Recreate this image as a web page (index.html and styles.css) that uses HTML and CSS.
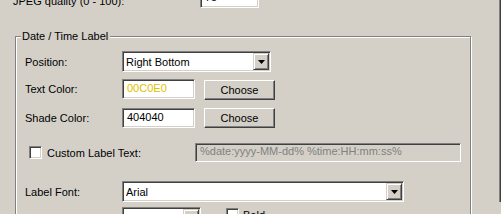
FILE: index.html
```html
<!DOCTYPE html>
<html>

<head>
    <title>Capture Settings</title>
    <meta charset="UTF-8">
    <link rel="stylesheet" href="styles.css">
</head>

<body>
    <div class="panel">
        <div class="row top-row">
            <span class="label jpeg-label">JPEG quality (0 - 100):</span>
            <div class="edit jpeg-edit">75</div>
        </div>

        <div class="group">
            <span class="legend">Date / Time Label</span>

            <div class="row row-position">
                <span class="label">Position:</span>
                <div class="combo combo-position">
                    <span class="combo-text">Right Bottom</span>
                    <span class="drop"><svg width="7" height="4" viewBox="0 0 7 4"><path d="M0 0h7L3.5 4z" fill="#000"/></svg></span>
                </div>
            </div>

            <div class="row row-text-color">
                <span class="label">Text Color:</span>
                <div class="edit color-edit text-color">00C0E0</div>
                <button class="btn">Choose</button>
            </div>

            <div class="row row-shade-color">
                <span class="label">Shade Color:</span>
                <div class="edit color-edit">404040</div>
                <button class="btn">Choose</button>
            </div>

            <div class="row row-custom">
                <span class="check"></span>
                <span class="check-label custom-label">Custom Label Text:</span>
                <div class="edit edit-disabled">%date:yyyy-MM-dd% %time:HH:mm:ss%</div>
            </div>

            <div class="row row-font">
                <span class="label">Label Font:</span>
                <div class="combo combo-font">
                    <span class="combo-text">Arial</span>
                    <span class="drop"><svg width="7" height="4" viewBox="0 0 7 4"><path d="M0 0h7L3.5 4z" fill="#000"/></svg></span>
                </div>
            </div>

            <div class="row row-size">
                <span class="label"></span>
                <div class="combo combo-size">
                    <span class="combo-text">10</span>
                    <span class="drop"><svg width="7" height="4" viewBox="0 0 7 4"><path d="M0 0h7L3.5 4z" fill="#000"/></svg></span>
                </div>
                <span class="check check-bold"></span>
                <span class="check-label">Bold</span>
            </div>
        </div>
    </div>
</body>

</html>
```

FILE: styles.css
```css
:root {
    --face: #D4D0C8;
    --shadow: #808080;
    --dark: #404040;
    --light: #ffffff;
}

html,
body {
    margin: 0;
    height: 100%;
    overflow: hidden;
}

body {
    background: var(--face);
    font-family: "Liberation Sans", Arial, sans-serif;
    font-size: 11px;
    color: #000;
}

.panel {
    width: 501px;
    height: 100%;
    box-sizing: border-box;
    padding-left: 13px;
    box-shadow: inset -1px 0 0 var(--dark), inset -2px 0 0 var(--shadow);
}

.row {
    display: flex;
    align-items: center;
}

.label {
    width: 97px;
    flex: none;
    white-space: nowrap;
}

/* sunken edit box */
.edit {
    box-sizing: border-box;
    height: 20px;
    line-height: 16px;
    padding: 0 4px;
    background: #fff;
    border: 1px solid;
    border-color: var(--shadow) var(--light) var(--light) var(--shadow);
    box-shadow: inset 1px 1px 0 var(--dark), inset -1px -1px 0 var(--face);
    white-space: nowrap;
    overflow: hidden;
}

.top-row {
    height: 20px;
    margin-top: -12px;
}

.jpeg-label {
    width: 187px;
    margin-top: 5px;
}

.jpeg-edit {
    width: 59px;
}

/* etched group box */
.group {
    position: relative;
    margin: 28px 0 0 2px;
    width: 456px;
    height: 300px;
    box-sizing: border-box;
    padding: 14px 0 0 9px;
    border: 1px solid var(--shadow);
    box-shadow: 1px 1px 0 var(--light), inset 1px 1px 0 var(--light);
}

.legend {
    position: absolute;
    top: -7px;
    left: 5px;
    padding: 0 2px 0 1px;
    line-height: 13px;
    background: var(--face);
}

/* combo box */
.combo {
    box-sizing: border-box;
    height: 21px;
    display: flex;
    align-items: center;
    background: #fff;
    border: 1px solid;
    border-color: var(--shadow) var(--light) var(--light) var(--shadow);
    box-shadow: inset 1px 1px 0 var(--dark), inset -1px -1px 0 var(--face);
    padding: 1px;
}

.combo-text {
    flex: 1;
    padding-left: 2px;
    white-space: nowrap;
}

.drop {
    box-sizing: border-box;
    width: 16px;
    height: 17px;
    display: flex;
    align-items: center;
    justify-content: center;
    background: var(--face);
    border: 1px solid;
    border-color: var(--face) var(--dark) var(--dark) var(--face);
    box-shadow: inset 1px 1px 0 var(--light), inset -1px -1px 0 var(--shadow);
}

.combo-position {
    width: 149px;
}

.combo-font {
    width: 282px;
}

.combo-size {
    width: 79px;
}

/* push button */
.btn {
    box-sizing: border-box;
    width: 71px;
    height: 20px;
    margin-left: 9px;
    padding: 0;
    font: inherit;
    color: #000;
    background: var(--face);
    border: 1px solid;
    border-color: var(--light) var(--dark) var(--dark) var(--light);
    box-shadow: inset -1px -1px 0 var(--shadow), inset 1px 1px 0 var(--face);
}

.color-edit {
    width: 73px;
}

.text-color {
    color: #E0C000;
}

.row-position {
    height: 21px;
}

.row-text-color {
    height: 20px;
    margin-top: 7px;
}

.row-text-color .btn {
    margin-top: 2px;
}

.row-shade-color {
    height: 20px;
    margin-top: 9px;
}

.row-custom {
    height: 19px;
    margin-top: 15px;
}

.row-font {
    height: 21px;
    margin-top: 19px;
}

.row-size {
    height: 21px;
    margin-top: 5px;
    align-items: flex-start;
}

/* check box */
.check {
    box-sizing: border-box;
    width: 13px;
    height: 13px;
    flex: none;
    background: #fff;
    border: 1px solid;
    border-color: var(--shadow) var(--light) var(--light) var(--shadow);
    box-shadow: inset 1px 1px 0 var(--dark), inset -1px -1px 0 var(--face);
}

.row-custom .check {
    margin-left: 4px;
}

.check-label {
    margin-left: 5px;
    white-space: nowrap;
}

.custom-label {
    width: 148px;
}

.edit-disabled {
    width: 266px;
    height: 19px;
    line-height: 15px;
    background: var(--face);
    color: var(--shadow);
}

.check-bold {
    margin: 1px 0 0 25px;
}

.row-size .check-label {
    margin-top: 2px;
    margin-left: 4px;
}
```
